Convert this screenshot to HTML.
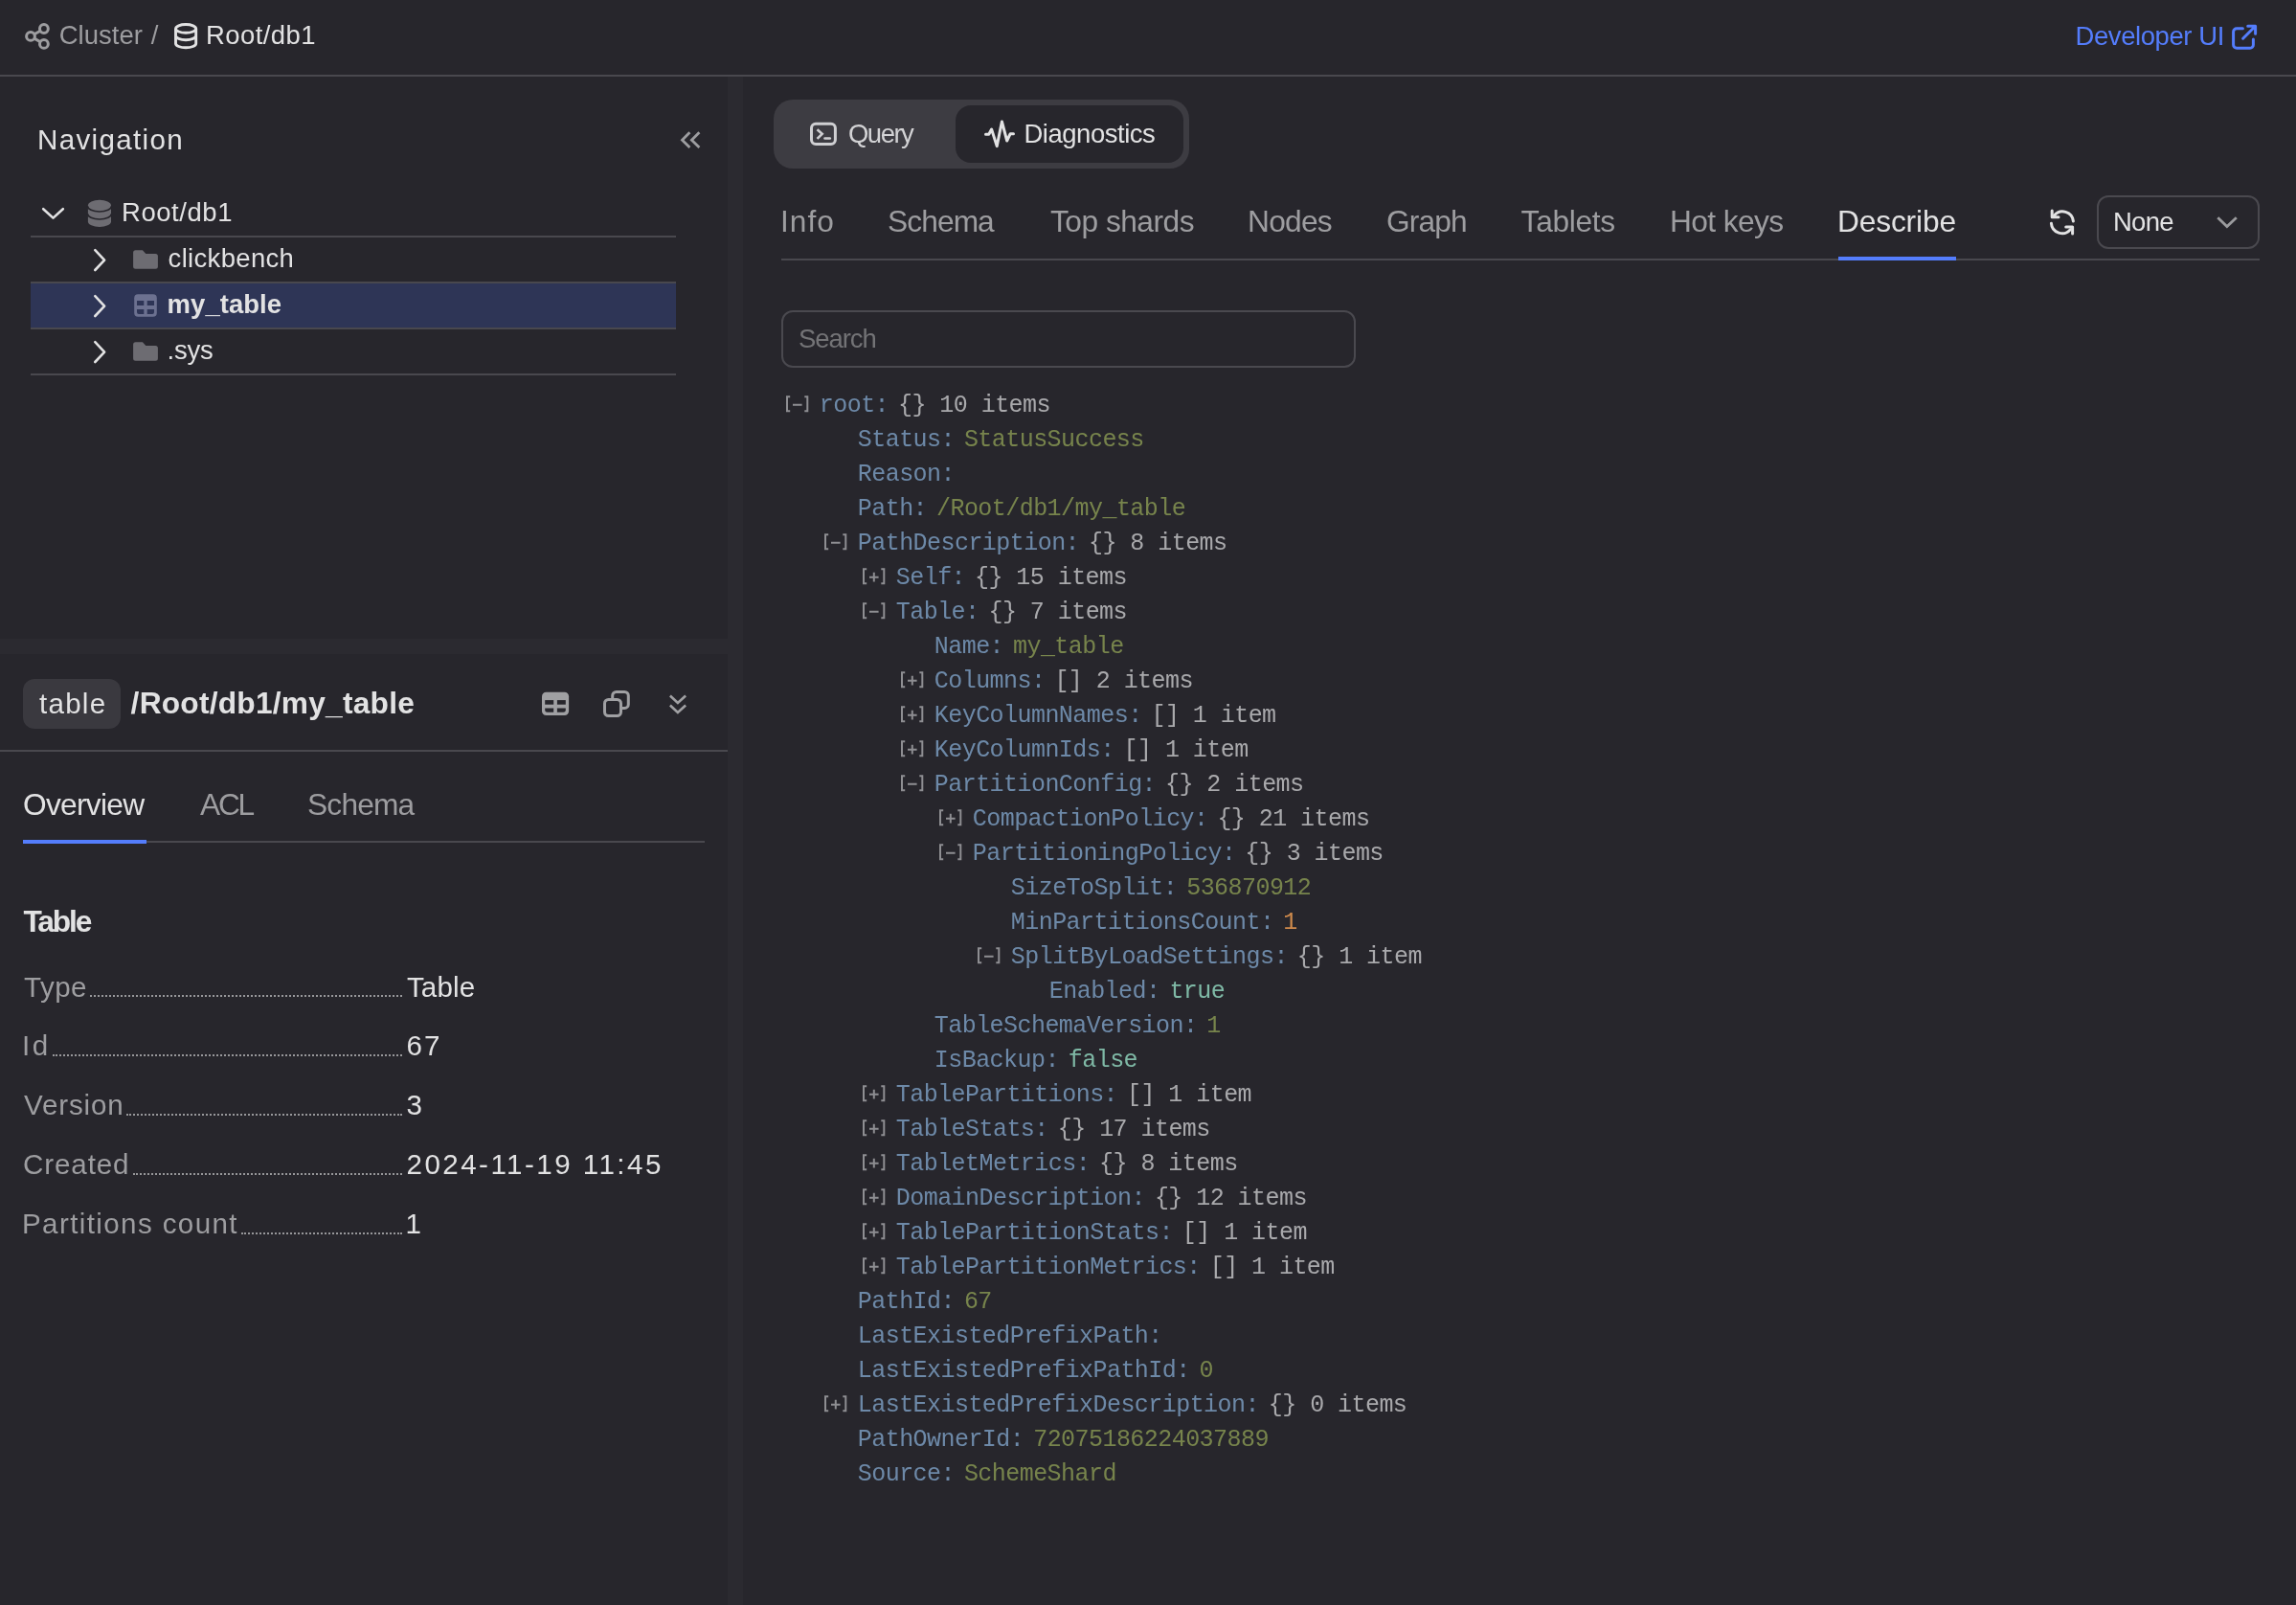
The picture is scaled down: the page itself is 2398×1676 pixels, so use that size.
<!DOCTYPE html>
<html><head><meta charset="utf-8"><title>YDB</title>
<style>
html,body{margin:0;padding:0;}
body{width:2398px;height:1676px;overflow:hidden;background:#27262c;position:relative;font-family:"Liberation Sans",sans-serif;}
.t{position:absolute;white-space:pre;line-height:80px;height:80px;}
.m{position:absolute;white-space:pre;line-height:80px;height:80px;font-family:"Liberation Mono",monospace;font-size:25px;letter-spacing:-0.55px;}
svg{position:absolute;left:0;top:0;}
#w{position:absolute;left:0;top:0;width:2398px;height:1676px;will-change:transform;}
</style></head><body><div id="w">
<div style="position:absolute;left:0px;top:78px;width:2398px;height:2px;background:#49484e;border-radius:0px;"></div>
<div style="position:absolute;left:760px;top:80px;width:16px;height:1596px;background:#2b2a30;border-radius:0px;"></div>
<div style="position:absolute;left:0px;top:667px;width:760px;height:16px;background:#2b2a30;border-radius:0px;"></div>
<div style="position:absolute;left:32px;top:296px;width:674px;height:46px;background:#2e3556;border-radius:0px;"></div>
<div style="position:absolute;left:32px;top:246px;width:674px;height:2px;background:#49484e;border-radius:0px;"></div>
<div style="position:absolute;left:32px;top:294px;width:674px;height:2px;background:#49484e;border-radius:0px;"></div>
<div style="position:absolute;left:32px;top:342px;width:674px;height:2px;background:#49484e;border-radius:0px;"></div>
<div style="position:absolute;left:32px;top:390px;width:674px;height:2px;background:#49484e;border-radius:0px;"></div>
<div style="position:absolute;left:24px;top:709px;width:102px;height:52px;background:#3a393f;border-radius:12px;"></div>
<div style="position:absolute;left:0px;top:783px;width:760px;height:2px;background:#49484e;border-radius:0px;"></div>
<div style="position:absolute;left:24px;top:878px;width:712px;height:2px;background:#49484e;border-radius:0px;"></div>
<div style="position:absolute;left:24px;top:877px;width:129px;height:4px;background:#547dfc;border-radius:0px;"></div>
<div style="position:absolute;left:94px;top:1039px;width:326px;height:0;border-bottom:2px dotted #97979a"></div>
<div style="position:absolute;left:54.9px;top:1101px;width:365.1px;height:0;border-bottom:2px dotted #97979a"></div>
<div style="position:absolute;left:131.7px;top:1163px;width:288.3px;height:0;border-bottom:2px dotted #97979a"></div>
<div style="position:absolute;left:139px;top:1225px;width:281px;height:0;border-bottom:2px dotted #97979a"></div>
<div style="position:absolute;left:252.4px;top:1287px;width:167.6px;height:0;border-bottom:2px dotted #97979a"></div>
<div style="position:absolute;left:808px;top:104px;width:434px;height:72px;background:#3d3c42;border-radius:20px;"></div>
<div style="position:absolute;left:998px;top:110px;width:238px;height:60px;background:#27262c;border-radius:16px;"></div>
<div style="position:absolute;left:816px;top:270px;width:1544px;height:2px;background:#49484e;border-radius:0px;"></div>
<div style="position:absolute;left:1920px;top:268px;width:123px;height:4px;background:#547dfc;border-radius:0px;"></div>
<div style="position:absolute;left:2190px;top:204px;width:170px;height:56px;box-sizing:border-box;border:2px solid #4a494f;background:transparent;border-radius:12px"></div>
<div style="position:absolute;left:816px;top:324px;width:600px;height:60px;box-sizing:border-box;border:2px solid #4a494f;background:transparent;border-radius:12px"></div>
<div class="t" style="left:61.7px;top:-3px;font-size:27.47px;font-weight:400;letter-spacing:0.05px;color:#9d9da0">Cluster</div>
<div class="t" style="left:157.7px;top:-3px;font-size:27.47px;font-weight:400;letter-spacing:0px;color:#9d9da0">/</div>
<div class="t" style="left:215px;top:-3px;font-size:27.47px;font-weight:400;letter-spacing:0.429px;color:#e2e2e3">Root/db1</div>
<div class="t" style="left:2167.6px;top:-2px;font-size:27.47px;font-weight:400;letter-spacing:-0.418px;color:#547dfc">Developer UI</div>
<div class="t" style="left:39px;top:106px;font-size:29.59px;font-weight:400;letter-spacing:1.333px;color:#e2e2e3">Navigation</div>
<div class="t" style="left:127px;top:182px;font-size:27.47px;font-weight:400;letter-spacing:0.571px;color:#e2e2e3">Root/db1</div>
<div class="t" style="left:175.6px;top:230px;font-size:27.47px;font-weight:400;letter-spacing:0.333px;color:#e2e2e3">clickbench</div>
<div class="t" style="left:174.6px;top:278px;font-size:27.47px;font-weight:600;letter-spacing:0.043px;color:#e2e2e3">my_table</div>
<div class="t" style="left:174.6px;top:326px;font-size:27.47px;font-weight:400;letter-spacing:-0.233px;color:#e2e2e3">.sys</div>
<div class="t" style="left:886px;top:100px;font-size:27.47px;font-weight:400;letter-spacing:-1.5px;color:#d3d3d5">Query</div>
<div class="t" style="left:1069.5px;top:100px;font-size:27.47px;font-weight:400;letter-spacing:-0.47px;color:#e2e2e3">Diagnostics</div>
<div class="t" style="left:815px;top:191px;font-size:31.7px;font-weight:400;letter-spacing:1.0px;color:#9d9da0">Info</div>
<div class="t" style="left:927px;top:191px;font-size:31.7px;font-weight:400;letter-spacing:-0.9px;color:#9d9da0">Schema</div>
<div class="t" style="left:1097px;top:191px;font-size:31.7px;font-weight:400;letter-spacing:-0.5px;color:#9d9da0">Top shards</div>
<div class="t" style="left:1303px;top:191px;font-size:31.7px;font-weight:400;letter-spacing:-0.75px;color:#9d9da0">Nodes</div>
<div class="t" style="left:1448px;top:191px;font-size:31.7px;font-weight:400;letter-spacing:-0.875px;color:#9d9da0">Graph</div>
<div class="t" style="left:1588.6px;top:191px;font-size:31.7px;font-weight:400;letter-spacing:-0.3px;color:#9d9da0">Tablets</div>
<div class="t" style="left:1744px;top:191px;font-size:31.7px;font-weight:400;letter-spacing:-0.6px;color:#9d9da0">Hot keys</div>
<div class="t" style="left:1919px;top:191px;font-size:31.7px;font-weight:400;letter-spacing:-0.143px;color:#e2e2e3">Describe</div>
<div class="t" style="left:2207px;top:192px;font-size:27.47px;font-weight:400;letter-spacing:-0.733px;color:#e2e2e3">None</div>
<div class="t" style="left:834px;top:314px;font-size:27.47px;font-weight:400;letter-spacing:-1.06px;color:#737376">Search</div>
<div class="t" style="left:41px;top:695px;font-size:29.59px;font-weight:400;letter-spacing:1.25px;color:#e2e2e3">table</div>
<div class="t" style="left:136.6px;top:694px;font-size:31.7px;font-weight:600;letter-spacing:0.235px;color:#e2e2e3">/Root/db1/my_table</div>
<div class="t" style="left:24px;top:800px;font-size:31.7px;font-weight:400;letter-spacing:-0.714px;color:#e2e2e3">Overview</div>
<div class="t" style="left:209px;top:800px;font-size:31.7px;font-weight:400;letter-spacing:-2.25px;color:#9d9da0">ACL</div>
<div class="t" style="left:321px;top:800px;font-size:31.7px;font-weight:400;letter-spacing:-0.8px;color:#9d9da0">Schema</div>
<div class="t" style="left:24.4px;top:922px;font-size:31.7px;font-weight:700;letter-spacing:-2.1px;color:#e2e2e3">Table</div>
<div class="t" style="left:25px;top:991px;font-size:29.59px;font-weight:400;letter-spacing:0.467px;color:#9d9da0">Type</div>
<div class="t" style="left:23px;top:1052px;font-size:29.59px;font-weight:400;letter-spacing:2.6px;color:#9d9da0">Id</div>
<div class="t" style="left:25px;top:1114px;font-size:29.59px;font-weight:400;letter-spacing:0.833px;color:#9d9da0">Version</div>
<div class="t" style="left:24px;top:1176px;font-size:29.59px;font-weight:400;letter-spacing:0.883px;color:#9d9da0">Created</div>
<div class="t" style="left:23px;top:1238px;font-size:29.59px;font-weight:400;letter-spacing:1.38px;color:#9d9da0">Partitions count</div>
<div class="t" style="left:424.9px;top:991px;font-size:29.59px;font-weight:400;letter-spacing:0.15px;color:#e2e2e3">Table</div>
<div class="t" style="left:424.5px;top:1052px;font-size:29.59px;font-weight:400;letter-spacing:2.0px;color:#e2e2e3">67</div>
<div class="t" style="left:424.5px;top:1114px;font-size:29.59px;font-weight:400;letter-spacing:0px;color:#e2e2e3">3</div>
<div class="t" style="left:424.5px;top:1176px;font-size:29.59px;font-weight:400;letter-spacing:2.447px;color:#e2e2e3">2024-11-19 11:45</div>
<div class="t" style="left:423.5px;top:1238px;font-size:29.59px;font-weight:400;letter-spacing:0px;color:#e2e2e3">1</div>
<div class="m" style="left:855.8px;top:384px;color:#6d89a8">root:</div>
<div class="m" style="left:938.0px;top:384px;color:#a9a9ac">{} 10 items</div>
<div class="m" style="left:895.8px;top:420px;color:#6d89a8">Status:</div>
<div class="m" style="left:1006.9px;top:420px;color:#77844c">StatusSuccess</div>
<div class="m" style="left:895.8px;top:456px;color:#6d89a8">Reason:</div>
<div class="m" style="left:895.8px;top:492px;color:#6d89a8">Path:</div>
<div class="m" style="left:978.0px;top:492px;color:#77844c">/Root/db1/my_table</div>
<div class="m" style="left:895.8px;top:528px;color:#6d89a8">PathDescription:</div>
<div class="m" style="left:1137.0px;top:528px;color:#a9a9ac">{} 8 items</div>
<div class="m" style="left:935.8px;top:564px;color:#6d89a8">Self:</div>
<div class="m" style="left:1018.0px;top:564px;color:#a9a9ac">{} 15 items</div>
<div class="m" style="left:935.8px;top:600px;color:#6d89a8">Table:</div>
<div class="m" style="left:1032.5px;top:600px;color:#a9a9ac">{} 7 items</div>
<div class="m" style="left:975.8px;top:636px;color:#6d89a8">Name:</div>
<div class="m" style="left:1058.0px;top:636px;color:#77844c">my_table</div>
<div class="m" style="left:975.8px;top:672px;color:#6d89a8">Columns:</div>
<div class="m" style="left:1101.4px;top:672px;color:#a9a9ac">[] 2 items</div>
<div class="m" style="left:975.8px;top:708px;color:#6d89a8">KeyColumnNames:</div>
<div class="m" style="left:1202.5px;top:708px;color:#a9a9ac">[] 1 item</div>
<div class="m" style="left:975.8px;top:744px;color:#6d89a8">KeyColumnIds:</div>
<div class="m" style="left:1173.6px;top:744px;color:#a9a9ac">[] 1 item</div>
<div class="m" style="left:975.8px;top:780px;color:#6d89a8">PartitionConfig:</div>
<div class="m" style="left:1217.0px;top:780px;color:#a9a9ac">{} 2 items</div>
<div class="m" style="left:1015.8px;top:816px;color:#6d89a8">CompactionPolicy:</div>
<div class="m" style="left:1271.4px;top:816px;color:#a9a9ac">{} 21 items</div>
<div class="m" style="left:1015.8px;top:852px;color:#6d89a8">PartitioningPolicy:</div>
<div class="m" style="left:1300.3px;top:852px;color:#a9a9ac">{} 3 items</div>
<div class="m" style="left:1055.8px;top:888px;color:#6d89a8">SizeToSplit:</div>
<div class="m" style="left:1239.2px;top:888px;color:#77844c">536870912</div>
<div class="m" style="left:1055.8px;top:924px;color:#6d89a8">MinPartitionsCount:</div>
<div class="m" style="left:1340.3px;top:924px;color:#cf8a4c">1</div>
<div class="m" style="left:1055.8px;top:960px;color:#6d89a8">SplitByLoadSettings:</div>
<div class="m" style="left:1354.8px;top:960px;color:#a9a9ac">{} 1 item</div>
<div class="m" style="left:1095.8px;top:996px;color:#6d89a8">Enabled:</div>
<div class="m" style="left:1221.4px;top:996px;color:#7fb9a6">true</div>
<div class="m" style="left:975.8px;top:1032px;color:#6d89a8">TableSchemaVersion:</div>
<div class="m" style="left:1260.3px;top:1032px;color:#77844c">1</div>
<div class="m" style="left:975.8px;top:1068px;color:#6d89a8">IsBackup:</div>
<div class="m" style="left:1115.8px;top:1068px;color:#7fb9a6">false</div>
<div class="m" style="left:935.8px;top:1104px;color:#6d89a8">TablePartitions:</div>
<div class="m" style="left:1177.0px;top:1104px;color:#a9a9ac">[] 1 item</div>
<div class="m" style="left:935.8px;top:1140px;color:#6d89a8">TableStats:</div>
<div class="m" style="left:1104.8px;top:1140px;color:#a9a9ac">{} 17 items</div>
<div class="m" style="left:935.8px;top:1176px;color:#6d89a8">TabletMetrics:</div>
<div class="m" style="left:1148.1px;top:1176px;color:#a9a9ac">{} 8 items</div>
<div class="m" style="left:935.8px;top:1212px;color:#6d89a8">DomainDescription:</div>
<div class="m" style="left:1205.9px;top:1212px;color:#a9a9ac">{} 12 items</div>
<div class="m" style="left:935.8px;top:1248px;color:#6d89a8">TablePartitionStats:</div>
<div class="m" style="left:1234.8px;top:1248px;color:#a9a9ac">[] 1 item</div>
<div class="m" style="left:935.8px;top:1284px;color:#6d89a8">TablePartitionMetrics:</div>
<div class="m" style="left:1263.7px;top:1284px;color:#a9a9ac">[] 1 item</div>
<div class="m" style="left:895.8px;top:1320px;color:#6d89a8">PathId:</div>
<div class="m" style="left:1006.9px;top:1320px;color:#77844c">67</div>
<div class="m" style="left:895.8px;top:1356px;color:#6d89a8">LastExistedPrefixPath:</div>
<div class="m" style="left:895.8px;top:1392px;color:#6d89a8">LastExistedPrefixPathId:</div>
<div class="m" style="left:1252.6px;top:1392px;color:#77844c">0</div>
<div class="m" style="left:895.8px;top:1428px;color:#6d89a8">LastExistedPrefixDescription:</div>
<div class="m" style="left:1324.8px;top:1428px;color:#a9a9ac">{} 0 items</div>
<div class="m" style="left:895.8px;top:1464px;color:#6d89a8">PathOwnerId:</div>
<div class="m" style="left:1079.2px;top:1464px;color:#77844c">72075186224037889</div>
<div class="m" style="left:895.8px;top:1500px;color:#6d89a8">Source:</div>
<div class="m" style="left:1006.9px;top:1500px;color:#77844c">SchemeShard</div>
<svg width="2398" height="1676" viewBox="0 0 2398 1676">
<path d="M825.1999999999999,414.3h-3.2v15h3.2 M840.3,414.3h3v15h-3 M828.0,422.7h9.6" stroke="#8e8e92" stroke-width="2" fill="none"/>
<path d="M865.1999999999999,558.3h-3.2v15h3.2 M880.3,558.3h3v15h-3 M868.0,566.7h9.6" stroke="#8e8e92" stroke-width="2" fill="none"/>
<path d="M905.1999999999999,594.3h-3.2v15h3.2 M920.3,594.3h3v15h-3 M908.0,602.7h9.6 M912.8,597.8v9.6" stroke="#8e8e92" stroke-width="2" fill="none"/>
<path d="M905.1999999999999,630.3h-3.2v15h3.2 M920.3,630.3h3v15h-3 M908.0,638.7h9.6" stroke="#8e8e92" stroke-width="2" fill="none"/>
<path d="M945.1999999999999,702.3h-3.2v15h3.2 M960.3,702.3h3v15h-3 M948.0,710.7h9.6 M952.8,705.8v9.6" stroke="#8e8e92" stroke-width="2" fill="none"/>
<path d="M945.1999999999999,738.3h-3.2v15h3.2 M960.3,738.3h3v15h-3 M948.0,746.7h9.6 M952.8,741.8v9.6" stroke="#8e8e92" stroke-width="2" fill="none"/>
<path d="M945.1999999999999,774.3h-3.2v15h3.2 M960.3,774.3h3v15h-3 M948.0,782.7h9.6 M952.8,777.8v9.6" stroke="#8e8e92" stroke-width="2" fill="none"/>
<path d="M945.1999999999999,810.3h-3.2v15h3.2 M960.3,810.3h3v15h-3 M948.0,818.7h9.6" stroke="#8e8e92" stroke-width="2" fill="none"/>
<path d="M985.1999999999999,846.3h-3.2v15h3.2 M1000.3,846.3h3v15h-3 M988.0,854.7h9.6 M992.8,849.8v9.6" stroke="#8e8e92" stroke-width="2" fill="none"/>
<path d="M985.1999999999999,882.3h-3.2v15h3.2 M1000.3,882.3h3v15h-3 M988.0,890.7h9.6" stroke="#8e8e92" stroke-width="2" fill="none"/>
<path d="M1025.2,990.3h-3.2v15h3.2 M1040.3,990.3h3v15h-3 M1028.0,998.7h9.6" stroke="#8e8e92" stroke-width="2" fill="none"/>
<path d="M905.1999999999999,1134.3h-3.2v15h3.2 M920.3,1134.3h3v15h-3 M908.0,1142.7h9.6 M912.8,1137.8v9.6" stroke="#8e8e92" stroke-width="2" fill="none"/>
<path d="M905.1999999999999,1170.3h-3.2v15h3.2 M920.3,1170.3h3v15h-3 M908.0,1178.7h9.6 M912.8,1173.8v9.6" stroke="#8e8e92" stroke-width="2" fill="none"/>
<path d="M905.1999999999999,1206.3h-3.2v15h3.2 M920.3,1206.3h3v15h-3 M908.0,1214.7h9.6 M912.8,1209.8v9.6" stroke="#8e8e92" stroke-width="2" fill="none"/>
<path d="M905.1999999999999,1242.3h-3.2v15h3.2 M920.3,1242.3h3v15h-3 M908.0,1250.7h9.6 M912.8,1245.8v9.6" stroke="#8e8e92" stroke-width="2" fill="none"/>
<path d="M905.1999999999999,1278.3h-3.2v15h3.2 M920.3,1278.3h3v15h-3 M908.0,1286.7h9.6 M912.8,1281.8v9.6" stroke="#8e8e92" stroke-width="2" fill="none"/>
<path d="M905.1999999999999,1314.3h-3.2v15h3.2 M920.3,1314.3h3v15h-3 M908.0,1322.7h9.6 M912.8,1317.8v9.6" stroke="#8e8e92" stroke-width="2" fill="none"/>
<path d="M865.1999999999999,1458.3h-3.2v15h3.2 M880.3,1458.3h3v15h-3 M868.0,1466.7h9.6 M872.8,1461.8v9.6" stroke="#8e8e92" stroke-width="2" fill="none"/>
<g stroke="#9d9da0" stroke-width="3" fill="none"><circle cx="45.9" cy="30" r="4.4"/><circle cx="32" cy="37.9" r="4.4"/><circle cx="45.9" cy="45.9" r="4.4"/><path d="M35.8,35.7 L42.1,32.2 M35.8,40.1 L42.1,43.7"/></g>
<g stroke="#e2e2e3" stroke-width="2.9" fill="none"><ellipse cx="194.1" cy="29.9" rx="10.6" ry="4.4"/><path d="M183.5,29.9 V45.4 A10.6,4.4 0 0 0 204.7,45.4 V29.9 M183.5,37.3 A10.6,4.4 0 0 0 204.7,37.3"/></g>
<g stroke="#547dfc" stroke-width="3" fill="none" stroke-linecap="round" stroke-linejoin="round"><path d="M2342.4,29.7 H2336.1 A3.5,3.5 0 0 0 2332.6,33.2 V46.8 A3.5,3.5 0 0 0 2336.1,50.3 H2349.9 A3.5,3.5 0 0 0 2353.4,46.8 V40.9"/><path d="M2342.6,40.2 L2355.1,27.7 M2347.7,27.2 H2355.6 V35.2"/></g>
<g stroke="#9d9da0" stroke-width="2.8" fill="none"><path d="M720.4,138.2 L712.5,146.2 L720.4,153.9 M730.4,138.2 L722.4,146.2 L730.4,153.9"/></g>
<path d="M45.2,218.2 L55.5,227.6 L65.8,218.2" stroke="#e2e2e3" stroke-width="2.6" fill="none" stroke-linecap="round" stroke-linejoin="round"/>
<path d="M91.9,214.6 A12.05,5.8 0 0 1 116,214.6 V231.2 A12.05,5.8 0 0 1 91.9,231.2Z" fill="#6d6c72"/><path d="M91.5,215.2 A12.45,5.8 0 0 0 116.4,215.2 M91.5,223.2 A12.45,5.8 0 0 0 116.4,223.2" stroke="#27262c" stroke-width="1.7" fill="none"/>
<path d="M99.3,261.2 L109.1,271.6 L99.3,282" stroke="#e2e2e3" stroke-width="2.6" fill="none" stroke-linecap="round" stroke-linejoin="round"/>
<path d="M99.3,309.2 L109.1,319.6 L99.3,330" stroke="#e2e2e3" stroke-width="2.6" fill="none" stroke-linecap="round" stroke-linejoin="round"/>
<path d="M99.3,357.2 L109.1,367.6 L99.3,378" stroke="#e2e2e3" stroke-width="2.6" fill="none" stroke-linecap="round" stroke-linejoin="round"/>
<path d="M141.6,261.2 H148.9 L152.3,264.9 H162.4 A2.5,2.5 0 0 1 164.9,267.4 V278.3 A2.5,2.5 0 0 1 162.4,280.8 H141.6 A2.5,2.5 0 0 1 139.1,278.3 V263.7 A2.5,2.5 0 0 1 141.6,261.2Z" fill="#6d6c72"/>
<path d="M141.6,357.2 H148.9 L152.3,360.9 H162.4 A2.5,2.5 0 0 1 164.9,363.4 V374.3 A2.5,2.5 0 0 1 162.4,376.8 H141.6 A2.5,2.5 0 0 1 139.1,374.3 V359.7 A2.5,2.5 0 0 1 141.6,357.2Z" fill="#6d6c72"/>
<g><rect x="140.2" y="307.2" width="23.6" height="23.6" rx="4" fill="#6c7190"/><g fill="#2e3556"><rect x="143" y="314" width="7.3" height="5"/><rect x="153.7" y="314" width="7.3" height="5"/><path d="M143,322.9 H150.3 V328 H145 A2,2 0 0 1 143,326Z"/><path d="M153.7,322.9 H161 V326 A2,2 0 0 1 159,328 H153.7Z"/></g></g>
<g stroke="#cfcfd2" stroke-width="3" fill="none" stroke-linecap="round"><rect x="847.5" y="129.3" width="24.9" height="21.2" rx="4.5"/><path d="M853.5,135.2 L858.7,139.9 L853.5,144.9" stroke-width="2.6" stroke-linecap="butt"/><path d="M861.5,144.5 H866.8" stroke-width="2.6"/></g>
<path d="M1029.5,140.2 H1032.8 L1035.6,135 L1041.2,152.6 L1046.4,127 L1051.7,147 L1055.2,139.7 H1058.5" stroke="#e2e2e3" stroke-width="3" fill="none" stroke-linecap="round" stroke-linejoin="round"/>
<g stroke="#e2e2e3" stroke-width="3" fill="none" stroke-linecap="round" stroke-linejoin="round"><path d="M2145.5,225 A11.3,11.3 0 0 1 2165.4,231"/><path d="M2143.2,219.9 V226.8 H2150"/><path d="M2142.4,233.2 A11.3,11.3 0 0 0 2162.4,239.6"/><path d="M2157.7,237 H2164.6 V243.9"/></g>
<path d="M2316.3,227.3 L2325.9,236.6 L2335.8,227.3" stroke="#9b9b9e" stroke-width="2.8" fill="none"/>
<g><rect x="566" y="722.7" width="28.1" height="24.3" rx="4.5" fill="#a0a0a3"/><g fill="#27262c"><rect x="569.2" y="731.1" width="9" height="4.6"/><rect x="581.9" y="731.1" width="8.9" height="4.6"/><path d="M569.2,739.4 H578.2 V743.7 H571.7 A2.5,2.5 0 0 1 569.2,741.2Z"/><path d="M581.9,739.4 H590.8 V741.2 A2.5,2.5 0 0 1 588.3,743.7 H581.9Z"/></g></g>
<g stroke="#a0a0a3" stroke-width="3" fill="none"><path d="M639.7,729 V726.4 A4,4 0 0 1 643.7,722.4 H652.3 A4,4 0 0 1 656.3,726.4 V735.4 A4,4 0 0 1 652.3,739.4 H649.5"/><rect x="631.5" y="730.4" width="17" height="17.1" rx="4"/></g>
<path d="M699.9,726.5 L707.9,734 L716.1,726.5 M699.9,736.5 L707.9,744 L716.1,736.5" stroke="#a0a0a3" stroke-width="2.6" fill="none"/>
</svg>
</div></body></html>
